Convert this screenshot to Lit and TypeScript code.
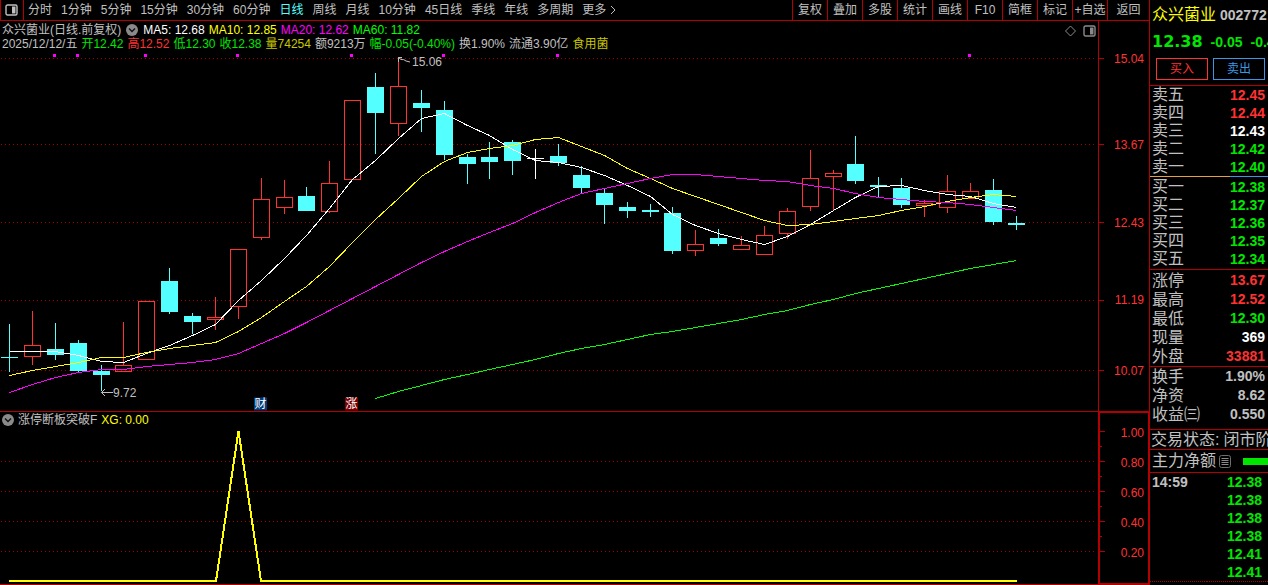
import { LitElement, html, svg, css } from "lit";
import { customElement } from "lit/decorators.js";
import { classMap } from "lit/directives/class-map.js";
import { styleMap } from "lit/directives/style-map.js";

const VIEW_W = 1098;
const PRICE_TOP = 21;
const PRICE_H = 390;
const SIGNAL_TOP = 412;
const SIGNAL_H = 172;

const PERIODS = ["分时", "1分钟", "5分钟", "15分钟", "30分钟", "60分钟", "日线", "周线", "月线", "10分钟", "45日线", "季线", "年线", "多周期"];
const TOOLS = ["复权", "叠加", "多股", "统计", "画线", "F10", "简框", "标记", "+自选", "返回"];

// x, kind (u = up, d = down, f = flat), high, low, body top, body bottom
type Candle = [number, string, number, number, number, number];
const CANDLES: Candle[] = [
  [9, "d", 324, 372, 357, 358], [32, "u", 311, 365, 345, 357], [55, "d", 323, 360, 349, 355],
  [78, "d", 340, 372, 343, 371], [101, "d", 365, 391, 371, 375], [123, "u", 322, 372, 365, 372],
  [146, "u", 301, 360, 301, 360], [169, "d", 268, 314, 281, 312], [192, "d", 313, 334, 316, 322],
  [215, "u", 297, 330, 317, 320], [238, "u", 249, 319, 249, 307], [261, "u", 178, 240, 199, 238],
  [284, "u", 180, 214, 197, 208], [306, "d", 187, 211, 196, 211], [329, "u", 161, 213, 183, 212],
  [352, "u", 100, 180, 100, 180], [375, "d", 73, 154, 87, 113], [398, "u", 57, 136, 86, 124],
  [421, "d", 90, 132, 103, 108], [444, "d", 101, 160, 110, 155], [467, "d", 154, 184, 157, 164],
  [489, "d", 142, 179, 157, 162], [512, "d", 140, 175, 142, 161], [535, "f", 149, 179, 158, 159],
  [558, "d", 144, 166, 156, 163], [581, "d", 166, 193, 175, 188], [604, "d", 189, 224, 193, 205],
  [627, "d", 202, 218, 207, 211], [650, "d", 204, 217, 210, 212], [672, "d", 207, 254, 213, 251],
  [695, "u", 230, 256, 244, 251], [718, "d", 229, 246, 238, 244], [741, "u", 236, 250, 245, 250],
  [764, "u", 226, 255, 235, 255], [787, "u", 208, 239, 211, 234], [810, "u", 150, 211, 178, 207],
  [833, "u", 170, 210, 173, 177], [855, "d", 136, 184, 164, 181], [878, "d", 177, 197, 185, 187],
  [901, "d", 178, 208, 188, 205], [924, "u", 200, 217, 203, 206], [947, "u", 175, 213, 191, 208],
  [970, "u", 183, 199, 191, 199], [993, "d", 179, 225, 190, 222], [1016, "d", 216, 230, 223, 225],
];

const AVERAGES: { name: string; start: number; ys: number[] }[] = [
  { name: "ma5", start: 0, ys: [351, 351, 351, 355, 361, 362, 353, 345, 335, 324, 300, 280, 258, 235, 208, 179, 160, 138, 118, 113, 125, 135, 149, 160, 162, 167, 175, 185, 196, 214, 225, 233, 239, 244, 236, 224, 210, 197, 186, 185, 190, 194, 196, 203, 207] },
  { name: "ma10", start: 0, ys: [375, 370, 366, 362, 357, 357, 352, 348, 345, 342, 331, 317, 301, 286, 266, 242, 219, 198, 176, 161, 152, 148, 145, 139, 137, 146, 155, 168, 178, 188, 196, 204, 212, 220, 225, 224, 221, 218, 215, 210, 206, 201, 197, 194, 196] },
  { name: "ma20", start: 0, ys: [392, 384, 377, 372, 369, 369, 366, 364, 362, 359, 353, 343, 333, 322, 310, 298, 286, 274, 262, 251, 241, 232, 223, 212, 202, 193, 188, 183, 178, 174, 174, 176, 178, 180, 181, 185, 188, 193, 197, 199, 201, 202, 204, 207, 210] },
  { name: "ma60", start: 16, ys: [398, 391, 385, 379, 374, 369, 364, 359, 353, 348, 344, 339, 334, 331, 327, 323, 319, 314, 310, 304, 299, 293, 288, 283, 278, 273, 268, 264, 260] },
];

const PRICE_TICKS: [number, string][] = [[58, "15.04"], [144, "13.67"], [222, "12.43"], [300, "11.19"], [370, "10.07"]];
const SIGNAL_TICKS: [number, string][] = [[431, "1.00"], [461, "0.80"], [491, "0.60"], [521, "0.40"], [551, "0.20"]];
const MARKS = [53, 76, 144, 236, 350, 442, 556, 968];

const ASKS = [["卖五", "12.45", "up"], ["卖四", "12.44", "up"], ["卖三", "12.43", "flat"], ["卖二", "12.42", "down"], ["卖一", "12.40", "down"]];
const BIDS = [["买一", "12.38", "down"], ["买二", "12.37", "down"], ["买三", "12.36", "down"], ["买四", "12.35", "down"], ["买五", "12.34", "down"]];
const STATS = [["涨停", "13.67", "up"], ["最高", "12.52", "up"], ["最低", "12.30", "down"], ["现量", "369", "flat"], ["外盘", "33881", "up"]];
const RATIOS = [["换手", "1.90%", "plain"], ["净资", "8.62", "plain"], ["收益㈢", "0.550", "plain"]];
const TICKS = [["14:59", "12.38"], ["", "12.38"], ["", "12.38"], ["", "12.38"], ["", "12.41"], ["", "12.41"]];

const panelIcon = html`<svg class="icon" width="13" height="12" viewBox="0 0 13 12" aria-hidden="true">
  <rect x="1" y="1" width="11" height="10" rx="1.5" fill="none" stroke="currentColor" stroke-width="1.4"></rect>
  <rect x="7" y="2.5" width="3.5" height="7" fill="currentColor"></rect>
</svg>`;

const chevronIcon = html`<svg class="icon" width="12" height="12" viewBox="0 0 12 12" aria-hidden="true">
  <circle cx="6" cy="6" r="6" fill="#8a8a8a"></circle>
  <path d="M3 4.5 L6 7.5 L9 4.5" fill="none" stroke="#111" stroke-width="1.4"></path>
</svg>`;

const baseStyles = css`
  :host {
    font-family: "Liberation Sans", "Noto Sans CJK SC", sans-serif;
    font-size: 12px;
    line-height: 14px;
    color: #c0c0c0;
    --rule: #b40000;
    --up: #ff3232;
    --down: #00e600;
  }
  * { box-sizing: border-box; }
  button {
    font: inherit;
    color: inherit;
    background: none;
    border: 0;
    margin: 0;
    padding: 0;
    white-space: nowrap;
    cursor: pointer;
  }
  .icon { display: block; flex: none; }
`;

@customElement("period-toolbar")
export class PeriodToolbar extends LitElement {
  static styles = [baseStyles, css`
    :host {
      display: flex;
      justify-content: space-between;
      height: 21px;
      border-bottom: 1px solid var(--rule);
      overflow: hidden;
    }
    .periods { display: flex; align-items: center; gap: 9px; min-width: 0; }
    .toggle {
      display: flex;
      align-items: center;
      width: 24px;
      height: 20px;
      margin-right: -5px;
      padding-left: 4px;
      border: solid var(--rule);
      border-width: 0 1px;
    }
    .active { color: #54ffff; }
    .more { display: flex; align-items: center; gap: 4px; }
    .tools { display: grid; grid-template-columns: repeat(9, 35px) 42px; }
    .tools button { border-left: 1px solid var(--rule); }
  `];

  render() {
    return html`
      <nav class="periods" aria-label="周期">
        <button class="toggle" aria-label="侧栏">${panelIcon}</button>
        ${PERIODS.map((p) => html`<button class=${classMap({ active: p === "日线" })}>${p}</button>`)}
        <button class="more">更多
          <svg class="icon" width="6" height="10" viewBox="0 0 6 10" aria-hidden="true">
            <path d="M1 1 L5 5 L1 9" fill="none" stroke="currentColor"></path>
          </svg>
        </button>
      </nav>
      <div class="tools">${TOOLS.map((t) => html`<button>${t}</button>`)}</div>
    `;
  }
}

const chartStyles = css`
  :host {
    display: grid;
    grid-template-columns: minmax(0, 1fr) 51px;
    border-bottom: 1px solid var(--rule);
    min-height: 0;
  }
  .plot { position: relative; min-height: 0; overflow: hidden; }
  .canvas, .scale { display: block; position: absolute; inset: 0; width: 100%; height: 100%; }
  .canvas { shape-rendering: crispEdges; }
  .axis { position: relative; }
  .scale text { fill: var(--up); text-anchor: end; }
  .scale line { stroke: var(--rule); shape-rendering: crispEdges; }
  .grid { stroke: #a00000; stroke-dasharray: 1 3; }
  .heading { position: absolute; top: 0; left: 0; }
  .line { display: flex; align-items: center; gap: 4px; white-space: nowrap; }
  .yellow { color: #ffff00; }
`;

@customElement("price-chart")
export class PriceChart extends LitElement {
  static styles = [baseStyles, chartStyles, css`
    .heading { padding: 2px 0 0 2px; }
    .title { margin-right: 1px; }
    .chevron { margin-right: 1px; }
    .ma5 { color: #fff; stroke: #fff; }
    .ma10 { color: #ff0; stroke: #ff0; }
    .ma20 { color: #f0f; stroke: #f0f; }
    .ma60 { color: #0f0; stroke: #0f0; }
    .line .ma5, .line .ma10, .line .ma20, .line .ma60 { stroke: none; }
    .average { fill: none; }
    .red { color: var(--up); }
    .green { color: var(--down); }
    .gold { color: #c8c800; }
    .u { stroke: #ff3232; fill: none; }
    .d { stroke: #54ffff; fill: #54ffff; }
    .f { stroke: #fff; fill: #fff; }
    .mark { fill: #f0f; }
    .corner { position: absolute; top: 4px; right: 2px; display: flex; gap: 7px; color: #8a8a8a; }
    .note { position: absolute; display: flex; align-items: center; transform: translateY(-50%); }
    .badge {
      position: absolute;
      width: 13px;
      height: 13px;
      line-height: 13px;
      color: #fff;
      background: #003c78;
      text-align: center;
      transform: translateY(-50%);
    }
    .alert { background: #780000; }
    .axis { border-left: 1px solid var(--rule); }
  `];

  private place(x: number, y: number) {
    return styleMap({ left: `${(x / VIEW_W) * 100}%`, top: `${((y - PRICE_TOP) / PRICE_H) * 100}%` });
  }

  private candle([x, kind, high, low, top, bottom]: Candle) {
    const c = x + 0.5;
    const y = (v: number) => v - PRICE_TOP;
    if (kind === "u") {
      return svg`<g class="u">
        <path d="M${c} ${y(high)}V${y(top)}M${c} ${y(bottom)}V${y(low)}"></path>
        <rect x=${c - 8} y=${y(top) + 0.5} width="16" height=${bottom - top - 1}></rect>
      </g>`;
    }
    return svg`<g class=${kind}>
      <path d="M${c} ${y(high)}V${y(low)}"></path>
      <rect x=${c - 8.5} y=${y(top)} width="17" height=${bottom - top} stroke="none"></rect>
    </g>`;
  }

  render() {
    return html`
      <div class="plot">
        <svg class="canvas" viewBox="0 0 ${VIEW_W} ${PRICE_H}" preserveAspectRatio="none" role="img" aria-label="日线">
          ${PRICE_TICKS.map(([y]) => svg`<line class="grid" x1="1" x2="1096" y1=${y - PRICE_TOP + 0.5} y2=${y - PRICE_TOP + 0.5}></line>`)}
          ${CANDLES.map((c) => this.candle(c))}
          ${AVERAGES.map((a) => svg`<polyline class="average ${a.name}" points=${a.ys.map((y, i) => `${CANDLES[i + a.start][0] + 0.5},${y - PRICE_TOP + 0.5}`).join(" ")}></polyline>`)}
          ${MARKS.map((x) => svg`<rect class="mark" x=${x} y="33" width="3" height="3"></rect>`)}
        </svg>
        <div class="heading">
          <div class="line">
            <span class="title">众兴菌业(日线.前复权)</span>
            <span class="chevron">${chevronIcon}</span>
            <span class="ma5">MA5: 12.68</span>
            <span class="ma10">MA10: 12.85</span>
            <span class="ma20">MA20: 12.62</span>
            <span class="ma60">MA60: 11.82</span>
          </div>
          <div class="line">
            <span>2025/12/12/五</span>
            <span class="green">开12.42</span>
            <span class="red">高12.52</span>
            <span class="green">低12.30</span>
            <span class="green">收12.38</span>
            <span class="gold">量74254</span>
            <span>额9213万</span>
            <span class="green">幅-0.05(-0.40%)</span>
            <span>换1.90%</span>
            <span>流通3.90亿</span>
            <span class="gold">食用菌</span>
          </div>
        </div>
        <div class="corner">
          <svg class="icon" width="11" height="12" viewBox="0 0 11 12" aria-hidden="true">
            <path d="M5.5 1 L10.5 6 L5.5 11 L0.5 6 Z" fill="none" stroke="currentColor"></path>
          </svg>
          ${panelIcon}
        </div>
        <span class="note" style=${this.place(398, 62)}>
          <svg class="icon" width="14" height="10" viewBox="0 0 14 10" aria-hidden="true">
            <path d="M4 0.5 H0.5 V5 M0.5 0.5 L3 2.5 Q6 2 8 4 L12 5" fill="none" stroke="#c0c0c0"></path>
          </svg>15.06
        </span>
        <span class="note" style=${this.place(101, 393)}>
          <svg class="icon" width="12" height="10" viewBox="0 0 12 10" aria-hidden="true">
            <path d="M0.5 4.5 H12 M4 1 L0.5 4.5 L4 8" fill="none" stroke="#c0c0c0"></path>
          </svg>9.72
        </span>
        <span class="badge" style=${this.place(254, 404)}>财</span>
        <span class="badge alert" style=${this.place(345, 404)}>涨</span>
      </div>
      <div class="axis">
        <svg class="scale" aria-hidden="true">
          ${PRICE_TICKS.map(([y, label]) => {
            const at = `${((y - PRICE_TOP + 0.5) / PRICE_H) * 100}%`;
            return svg`<line x1="0" x2="5" y1=${at} y2=${at}></line><text x="45" y=${at} dy="4">${label}</text>`;
          })}
        </svg>
      </div>
    `;
  }
}

@customElement("signal-chart")
export class SignalChart extends LitElement {
  static styles = [baseStyles, chartStyles, css`
    .heading { padding: 1px 0 0 2px; }
    .signal { fill: none; stroke: #ff0; stroke-width: 2; }
    .axis { border: solid var(--rule); border-width: 1px 1px 1px 2px; }
  `];

  render() {
    const base = 581 - SIGNAL_TOP;
    const minor = [446, 476, 506, 536];
    // The axis box has a one-pixel top and bottom border around its scale.
    const at = (y: number) => `${((y - SIGNAL_TOP - 0.5) / (SIGNAL_H - 2)) * 100}%`;
    return html`
      <div class="plot">
        <svg class="canvas" viewBox="0 0 ${VIEW_W} ${SIGNAL_H}" preserveAspectRatio="none" role="img" aria-label="XG">
          ${SIGNAL_TICKS.slice(1).map(([y]) => svg`<line class="grid" x1="1" x2="1096" y1=${y - SIGNAL_TOP + 0.5} y2=${y - SIGNAL_TOP + 0.5}></line>`)}
          <polyline class="signal" points="9,${base} 216,${base} 238.5,19 261,${base} 1017,${base}"></polyline>
        </svg>
        <div class="heading line">
          ${chevronIcon}
          <span>涨停断板突破F</span>
          <span class="yellow">XG: 0.00</span>
        </div>
      </div>
      <div class="axis">
        <svg class="scale" aria-hidden="true">
          ${minor.map((y) => svg`<line x1="0" x2="2" y1=${at(y)} y2=${at(y)}></line>`)}
          ${SIGNAL_TICKS.map(([y, label]) => svg`<line x1="0" x2="5" y1=${at(y)} y2=${at(y)}></line><text x="44" y=${at(y)} dy="5">${label}</text>`)}
        </svg>
      </div>
    `;
  }
}

@customElement("quote-panel")
export class QuotePanel extends LitElement {
  static styles = [baseStyles, css`
    :host {
      display: block;
      border-left: 1px solid var(--rule);
      font-size: 16px;
      overflow: hidden;
      white-space: nowrap;
    }
    .head { height: 86px; padding-left: 2px; border-bottom: 1px solid var(--rule); }
    .name { display: flex; gap: 4px; line-height: 30px; color: #ff0; }
    .code, .value, .change, .time { font-size: 14px; font-weight: bold; }
    .code { color: #c0c0c0; }
    .quote { display: flex; gap: 8px; line-height: 24px; color: var(--down); }
    .last { font-family: "DejaVu Sans", sans-serif; font-size: 16px; font-weight: bold; }
    .trade { display: grid; grid-template-columns: 1fr 1fr; gap: 5px; padding: 4px 3px 0 4px; font-size: 12px; }
    .trade button { height: 22px; border: 1px solid; }
    .buy { color: var(--up); }
    .sell { color: #3c96e6; }
    table { width: 100%; border-collapse: collapse; line-height: 18px; }
    th, td { padding: 0; }
    th { font-weight: normal; text-align: left; padding-left: 2px; }
    .value { text-align: right; padding-right: 3px; }
    .loose { line-height: 19px; }
    .spread { height: 1px; background: linear-gradient(to right, #e6a03c 68%, #3c96e6 68%); }
    .section { border-bottom: 1px solid var(--rule); }
    .bids { padding: 1px 0; }
    .stats { padding-top: 1px; }
    .ratios { padding-bottom: 5px; }
    .status { display: flex; gap: 4px; line-height: 19px; padding-left: 1px; }
    .flow { display: flex; align-items: center; line-height: 22px; padding-left: 2px; }
    .flow .icon { margin: 0 12px 0 3px; }
    .bar { flex: 1; height: 7px; background: var(--down); }
    .time { color: #c0c0c0; }
    .ticks { border-bottom: 1px dotted var(--rule); }
    .ticks .value { padding-right: 6px; }
    .up { color: var(--up); }
    .down { color: var(--down); }
    .flat { color: #fff; }
    .plain { color: #c0c0c0; }
  `];

  private rows(items: string[][], loose = false) {
    return html`<table class=${classMap({ loose })}><tbody>
      ${items.map(([label, value, tone]) => html`<tr><th scope="row">${label}</th><td class="value ${tone}">${value}</td></tr>`)}
    </tbody></table>`;
  }

  render() {
    return html`
      <header class="head">
        <div class="name"><span>众兴菌业</span><span class="code">002772</span></div>
        <div class="quote"><span class="last">12.38</span><span class="change">-0.05</span><span class="change">-0.40%</span></div>
        <div class="trade"><button class="buy">买入</button><button class="sell">卖出</button></div>
      </header>
      ${this.rows(ASKS)}
      <div class="spread"></div>
      <div class="section bids">${this.rows(BIDS)}</div>
      <div class="section stats">${this.rows(STATS, true)}</div>
      <div class="section ratios">${this.rows(RATIOS, true)}</div>
      <div class="section status"><span>交易状态:</span><span>闭市阶段</span></div>
      <div class="section flow">
        <span>主力净额</span>
        <svg class="icon" width="12" height="13" viewBox="0 0 12 13" aria-hidden="true">
          <rect x="0.5" y="0.5" width="11" height="12" rx="2" fill="none" stroke="#6e6e6e"></rect>
          <path d="M2.5 3.5 H9.5 M2.5 5.5 H9.5 M2.5 7.5 H9.5 M2.5 9.5 H9.5" stroke="#8a8a8a"></path>
        </svg>
        <div class="bar"></div>
      </div>
      <table class="ticks"><tbody>
        ${TICKS.map(([time, price]) => html`<tr><th class="time" scope="row">${time}</th><td class="value down">${price}</td></tr>`)}
      </tbody></table>
    `;
  }
}

@customElement("app-root")
export class AppRoot extends LitElement {
  static styles = [baseStyles, css`
    :host {
      display: grid;
      grid-template-columns: minmax(0, 1fr) 119px;
      height: 100vh;
      background: #000;
      overflow: hidden;
    }
    .board { display: grid; grid-template-rows: auto minmax(0, 1fr) 173px; min-width: 0; min-height: 0; }
  `];

  render() {
    return html`
      <main class="board">
        <period-toolbar></period-toolbar>
        <price-chart></price-chart>
        <signal-chart></signal-chart>
      </main>
      <quote-panel></quote-panel>
    `;
  }
}
